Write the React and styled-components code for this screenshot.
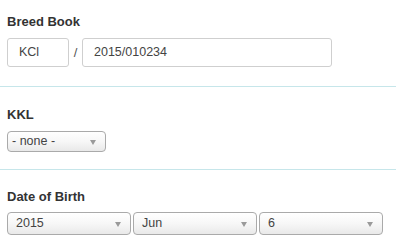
import React from "react";
import styled, { createGlobalStyle } from "styled-components";

const Global = createGlobalStyle`
  body {
    margin: 0;
    background: #fff;
    font-family: "Liberation Sans", Arial, sans-serif;
    color: #333;
  }
`;

const Form = styled.div`
  width: 396px;
  padding-top: 14px;
`;

const Section = styled.div`
  padding: 0 0 ${(p) => p.bottom || 19}px 7px;
  border-bottom: ${(p) => (p.last ? "none" : "1px solid #c6e6ea")};
  margin-bottom: ${(p) => p.after || 0}px;
`;

const Label = styled.div`
  font-weight: bold;
  font-size: 13px;
  line-height: 16px;
  color: #333;
  margin-bottom: ${(p) => p.gap}px;
`;

const Row = styled.div`
  display: flex;
  align-items: center;
  gap: ${(p) => p.gap || 0}px;
`;

const Input = styled.div`
  box-sizing: border-box;
  width: ${(p) => p.width}px;
  height: 29px;
  border: 1px solid #cfcfcf;
  border-radius: 3px;
  padding-left: ${(p) => p.pad}px;
  font-size: 12.5px;
  line-height: 27px;
  color: #444;
`;

const Slash = styled.span`
  width: 13px;
  text-align: center;
  font-size: 13px;
  color: #555;
`;

const Select = styled.div`
  box-sizing: border-box;
  position: relative;
  width: ${(p) => p.width}px;
  height: ${(p) => p.height}px;
  border: 1px solid #aaa;
  border-radius: 4px;
  background: linear-gradient(#ffffff 0%, #f7f7f7 50%, #e9e9e9 100%);
  padding-left: ${(p) => p.pad}px;
  font-size: 12.5px;
  line-height: ${(p) => p.height - 2}px;
  color: #444;
`;

const Arrow = styled.span`
  position: absolute;
  right: 9px;
  top: 50%;
  margin-top: -2px;
  width: 0;
  height: 0;
  border-left: 3px solid transparent;
  border-right: 3px solid transparent;
  border-top: 5px solid #9a9a9a;
`;

export default function App() {
  return (
    <>
      <Global />
      <Form>
        <Section bottom={19} after={20}>
          <Label gap={8}>Breed Book</Label>
          <Row>
            <Input width={62} pad={11}>KCl</Input>
            <Slash>/</Slash>
            <Input width={250} pad={11}>2015/010234</Input>
          </Row>
        </Section>
        <Section bottom={17} after={19}>
          <Label gap={8}>KKL</Label>
          <Row>
            <Select width={99} height={21} pad={4}>
              - none -
              <Arrow />
            </Select>
          </Row>
        </Section>
        <Section last>
          <Label gap={7}>Date of Birth</Label>
          <Row gap={2}>
            <Select width={124} height={23} pad={8}>
              2015
              <Arrow />
            </Select>
            <Select width={124} height={23} pad={8}>
              Jun
              <Arrow />
            </Select>
            <Select width={124} height={23} pad={8}>
              6
              <Arrow />
            </Select>
          </Row>
        </Section>
      </Form>
    </>
  );
}
